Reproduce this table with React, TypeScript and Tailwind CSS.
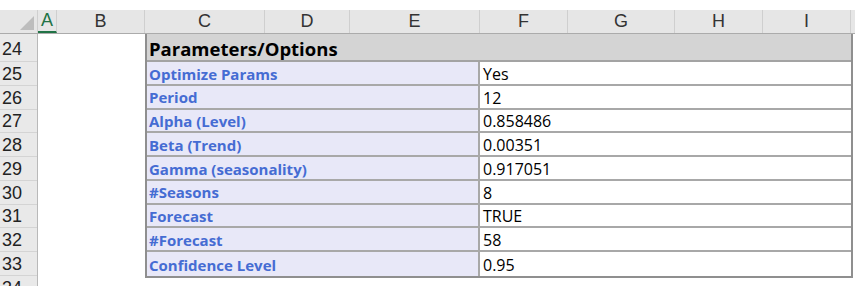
const columns = [
  { name: "C", w: "w-[120px]" },
  { name: "D", w: "w-[85px]" },
  { name: "E", w: "w-[130px]" },
  { name: "F", w: "w-[88px]" },
  { name: "G", w: "w-[107px]" },
  { name: "H", w: "w-[88px]" },
  { name: "I", w: "w-[88px]" },
]

const params = [
  ["Optimize Params", "Yes"],
  ["Period", "12"],
  ["Alpha (Level)", "0.858486"],
  ["Beta (Trend)", "0.00351"],
  ["Gamma (seasonality)", "0.917051"],
  ["#Seasons", "8"],
  ["Forecast", "TRUE"],
  ["#Forecast", "58"],
  ["Confidence Level", "0.95"],
]

const firstRow = 25

export default function App() {
  return (
    <div className="w-[868px] h-[286px] overflow-hidden bg-white pt-[10px] font-['Liberation_Sans',Arial,sans-serif]">
      {/* Column headers */}
      <div className="flex h-[24px] w-[855px] bg-[#e6e6e6] border-b border-[#ababab] text-[18px] text-[#333]">
        <div className="relative w-[38px] shrink-0 border-r border-[#cfcfcf]">
          <div className="absolute right-[3px] bottom-[3px] w-0 h-0 border-l-[14px] border-l-transparent border-b-[14px] border-b-[#bdbdbd]" />
        </div>
        <div className="w-[19px] shrink-0 flex items-center justify-center text-[#217346] border-b-2 border-[#217346] border-r border-r-[#cfcfcf]">
          A
        </div>
        <div className="w-[88px] shrink-0 flex items-center justify-center border-r border-[#cfcfcf]">B</div>
        {columns.map((c) => (
          <div key={c.name} className={`${c.w} shrink-0 flex items-center justify-center border-r border-[#cfcfcf]`}>
            {c.name}
          </div>
        ))}
      </div>

      <div className="flex">
        {/* Row numbers */}
        <div className="w-[38px] shrink-0 bg-[#e9e9e9] border-r border-[#b9b9b9] text-[18px] text-[#222]">
          <div className="h-[28px] flex items-center pl-[2px] pt-[3px] border-b border-[#d4d4d4]">24</div>
          {params.map((_, i) => (
            <div key={i} className="h-[23.78px] flex items-center pl-[2px] pt-[2px] border-b border-[#d4d4d4]">
              {firstRow + i}
            </div>
          ))}
          <div className="h-[24px] flex items-center pl-[2px] pt-[2px]">34</div>
        </div>

        <div className="w-[107px] shrink-0" />

        {/* Parameters table */}
        <div className="w-[708px] shrink-0 self-start border-x-2 border-b-2 border-[#8f8f8f] font-['Open_Sans','Noto_Sans',sans-serif]">
          <div className="h-[28px] flex items-center pl-[2px] pt-[3px] bg-[#d4d4d4] border-b-2 border-[#a3a3a3] text-[18.5px] font-bold text-black">
            Parameters/Options
          </div>
          {params.map(([label, value], i) => (
            <div
              key={label}
              className={`flex h-[23.78px] ${i < params.length - 1 ? "border-b-2 border-[#a8a8a8]" : ""}`}
            >
              <div className="w-[333px] shrink-0 flex items-center pl-[2px] pt-[2px] bg-[#e8e8f8] border-r-2 border-[#a8a8a8] text-[15px] font-bold text-[#456cd3]">
                {label}
              </div>
              <div className="flex-1 flex items-center pl-[3px] pt-[2px] text-[16px] text-black">{value}</div>
            </div>
          ))}
        </div>
      </div>
    </div>
  )
}
